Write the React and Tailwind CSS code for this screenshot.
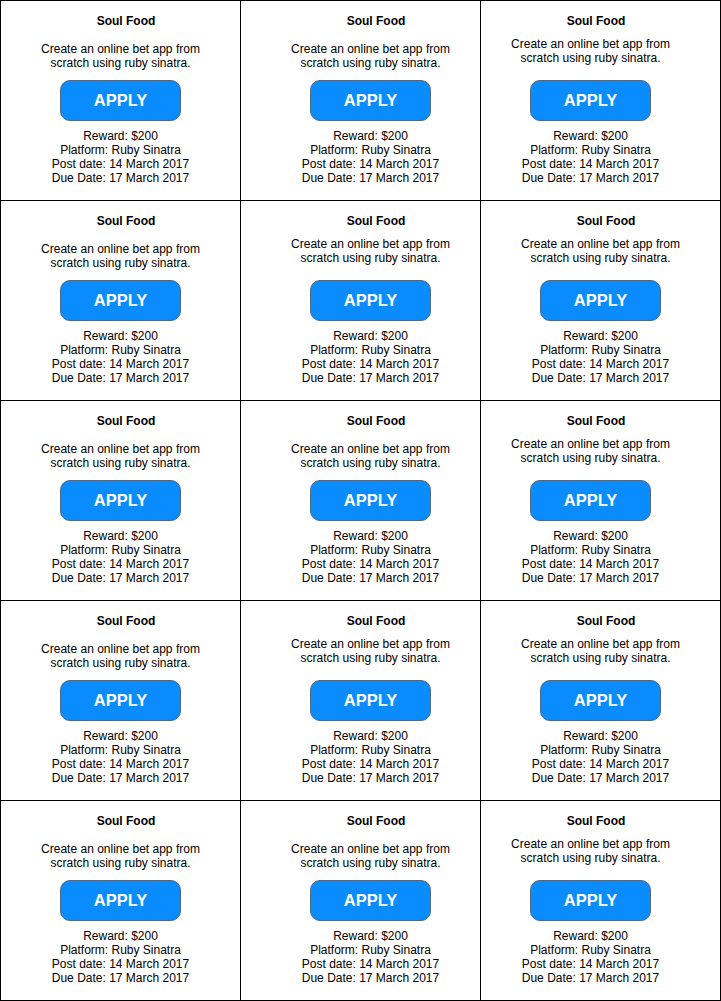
import React from "react";

const cells = [
  ["", "pl-[20px]", "pr-[20px]"],
  ["", "pl-[20px]", ""],
  ["", "pl-[20px]", "pr-[20px]"],
  ["", "pl-[20px]", ""],
  ["", "pl-[20px]", "pr-[20px]"],
];
const ups = [
  [false, false, true],
  [false, true, true],
  [false, false, true],
  [false, true, true],
  [false, false, true],
];

function Cell({ shift, up }) {
  return (
    <div className="w-[240px] h-[200px] border-r border-b border-black">
      <div className={"flex flex-col items-center " + shift}>
        <div className="w-full pl-[11px] mt-[13px] text-center font-bold text-[12px] leading-[14px] whitespace-nowrap">
          Soul Food
        </div>
        <div className={up ? "h-[52px] w-full pt-[9px]" : "h-[52px] w-full pt-[14px]"}>
          <p className="text-center text-[12px] leading-[14px] whitespace-nowrap">
            Create an online bet app from
            <br />
            scratch using ruby sinatra.
          </p>
        </div>
        <div className="w-[121px] h-[41px] rounded-[10px] bg-[#0a8cff] border border-[#4a6a8a] flex items-center justify-center text-white font-bold text-[16.5px] leading-none">
          APPLY
        </div>
        <div className="mt-[8px] text-center text-[12px] leading-[14px] whitespace-nowrap">
          <div>Reward: $200</div>
          <div>Platform: Ruby Sinatra</div>
          <div>Post date: 14 March 2017</div>
          <div>Due Date: 17 March 2017</div>
        </div>
      </div>
    </div>
  );
}

export default function App() {
  return (
    <div className="w-[721px] bg-white text-black font-['Liberation_Sans',Arial,sans-serif]">
      <div className="w-[721px] border-l border-t border-black flex flex-col">
        {cells.map((row, r) => (
          <div key={r} className="flex">
            {row.map((shift, c) => (
              <Cell key={c} shift={shift} up={ups[r][c]} />
            ))}
          </div>
        ))}
      </div>
    </div>
  );
}
